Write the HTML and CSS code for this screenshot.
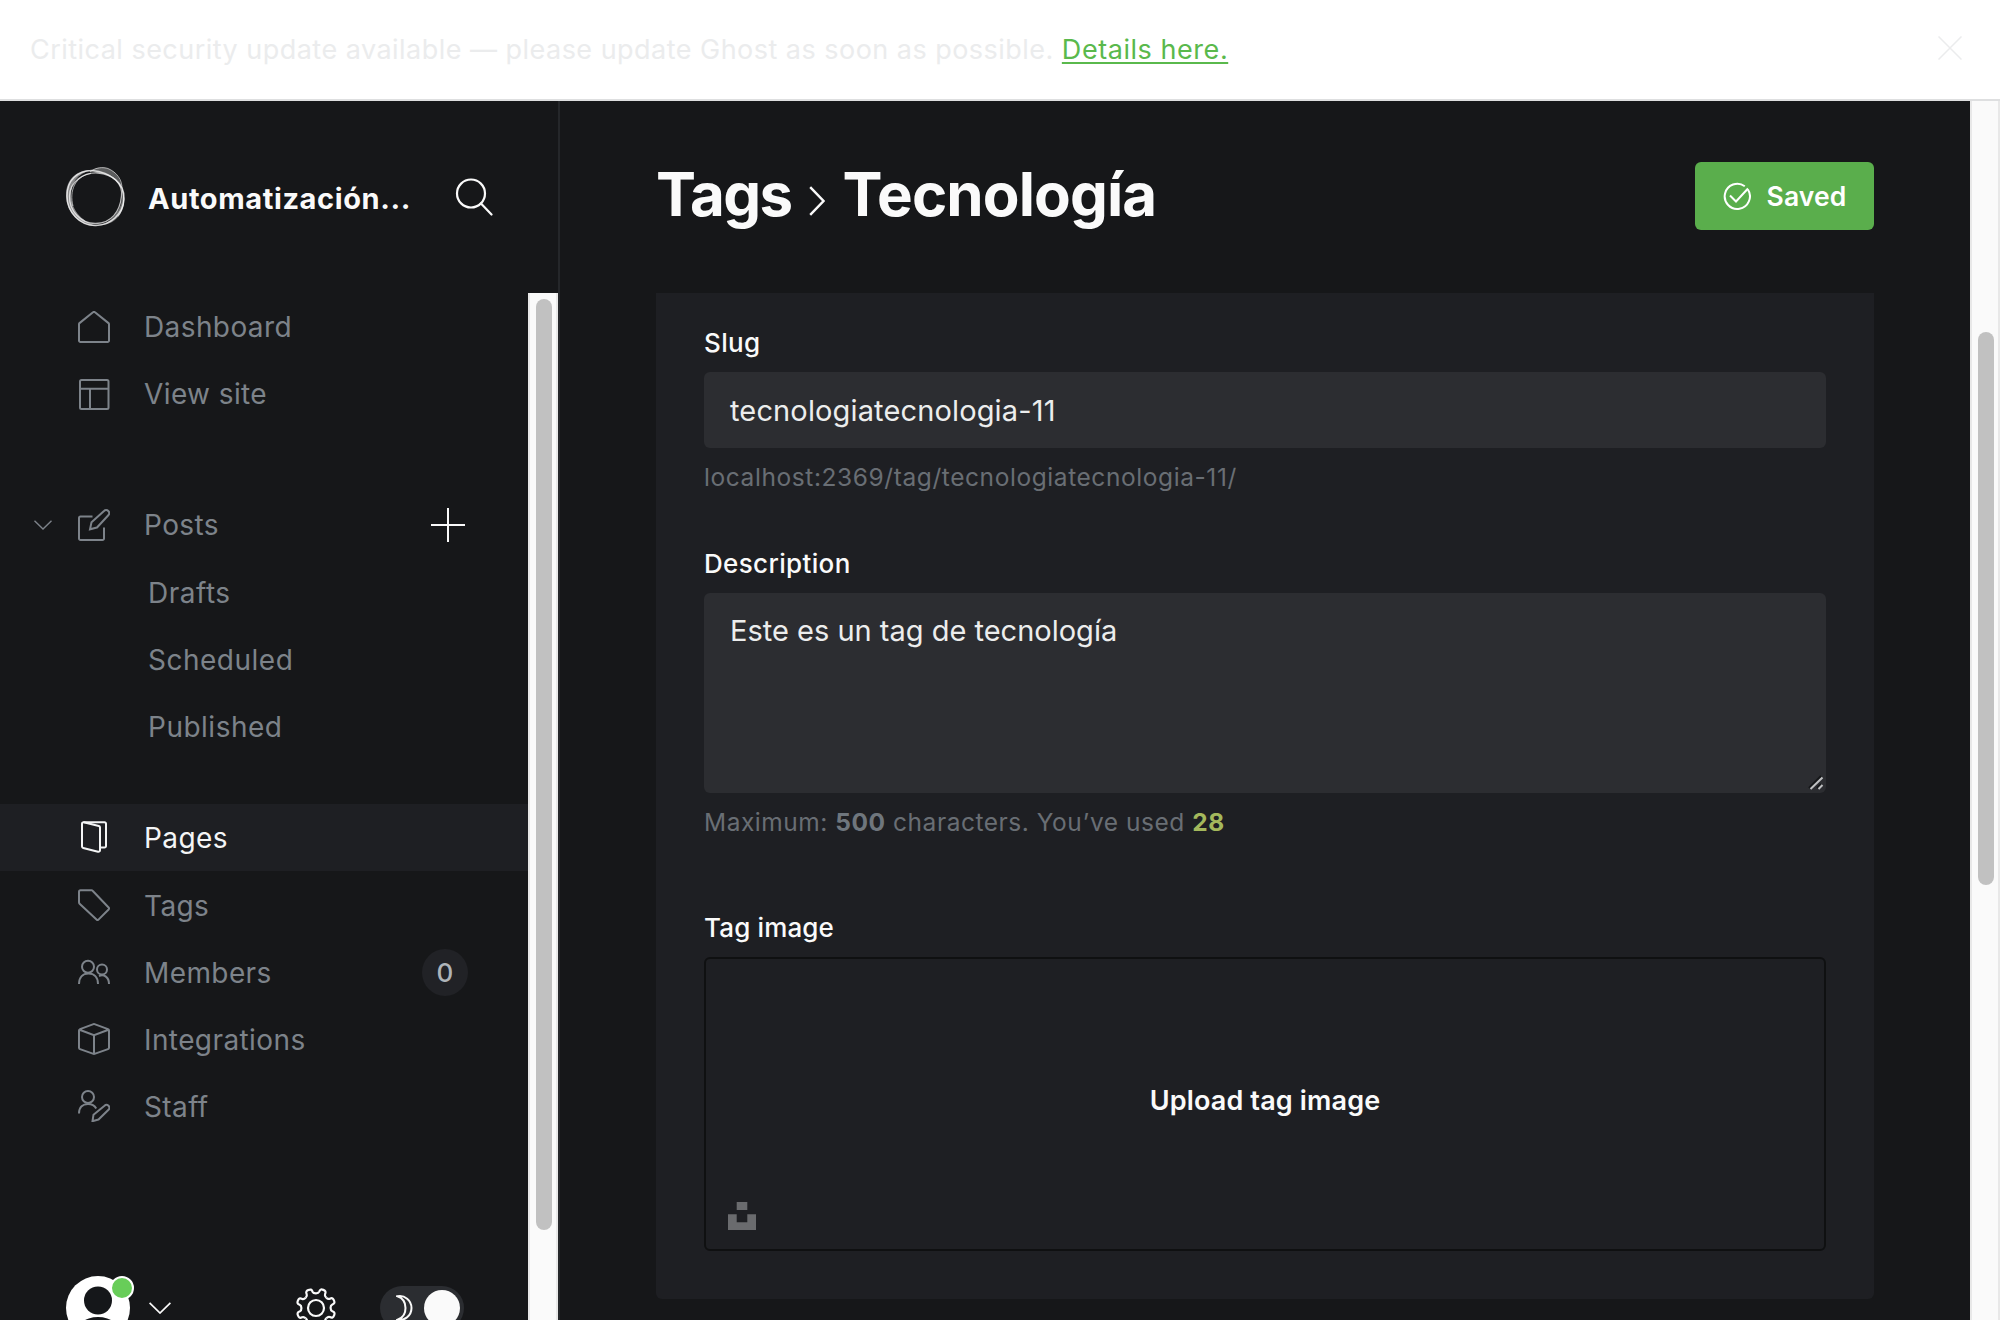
FILE: index.html
```html
<!DOCTYPE html>
<html lang="en">
<head>
<meta charset="utf-8">
<title>Tags - Ghost</title>
<link rel="stylesheet" href="styles.css">
</head>
<body>
<header class="banner">
  <p class="banner-text">Critical security update available — please update Ghost as soon as possible. <a class="banner-link" href="#">Details here.</a></p>
  <svg class="banner-close" viewBox="0 0 24 24"><path d="M.5.5l23 23M23.5.5l-23 23"/></svg>
</header>
<div class="app">
  <aside class="sidebar">
    <div class="site">
      <svg class="site-logo" viewBox="0 0 62 62">
        <g fill="#fff" stroke="none">
          <path opacity=".5" d="M26 4C10 4 1 15 1 29c0 16 12 31 31 31C20 57 6 46 6 29 6 17 12 8 26 4z"/>
          <path opacity=".3" d="M26 5C31 1.500 36 1 41 2c8 2 15 9 16 21C54 14 46 6 33 7z"/>
          <path opacity=".42" d="M57 23c4 10 3 20-4 28-5 6-13 9-22 8 10-1 16-5 20-11 6-8 7-16 6-25z"/>
        </g>
        <g fill="none" stroke="#fff">
          <path stroke-width="1.500" opacity=".75" d="M27 4.500C46 6 60 18 59 33 58 48 46 59 31 59.500 15 60 2 46 2 30 2 14 12 5 27 4.500z"/>
          <path stroke-width="1.300" opacity=".7" d="M33 7C48 8 58 18 56.500 30 55 46 46 57 31 57.500 16 58 4 45 4.500 30 5 16 18 6 33 7z"/>
          <path stroke-width="1" opacity=".6" d="M25 6C31 1 38 1 43 2.500c9 4 14 11 14 20 3 10 2 20-4 28M8 40C4 25 10 10 26 7.500"/>
        </g>
      </svg>
      <span class="site-name">Automatización...</span>
      <svg class="site-search" viewBox="0 0 38 38"><circle cx="16" cy="15.500" r="14"/><path d="M26 25.500l10.500 11"/></svg>
    </div>
    <div class="sidebar-body">
      <nav class="nav">
        <ul class="nav-group">
          <li class="nav-item"><svg class="icon" viewBox="0 0 32 32"><path d="M1 13.200V29.500A1.500 1.500 0 0 0 2.500 31h27a1.500 1.500 0 0 0 1.500-1.500V13.200a1.500 1.500 0 0 0-.5-1.100L17 1.300a1.500 1.500 0 0 0-2 0L1.500 12.100a1.500 1.500 0 0 0-.5 1.100z"/></svg><span>Dashboard</span></li>
          <li class="nav-item"><svg class="icon" viewBox="0 0 32 32"><rect x="2" y="2" width="28.500" height="29" rx="1.500"/><path d="M2 10.800h28.500M12 10.800V31"/></svg><span>View site</span></li>
        </ul>
        <ul class="nav-group">
          <li class="nav-item"><svg class="nav-arrow" viewBox="0 0 18 10"><path d="M.5.8L9 9 17.500.8"/></svg><svg class="icon" viewBox="0 0 32 32"><path d="M14.500 7.500H2.500A1.500 1.500 0 0 0 1 9v20.500A1.500 1.500 0 0 0 2.500 31h22a1.500 1.500 0 0 0 1.500-1.500V18.500"/><path d="M19 18.500l-7 1.800 1.500-7L26 2a3 3 0 0 1 4.300 0 3 3 0 0 1 0 4.200z"/></svg><span>Posts</span><svg class="nav-add" viewBox="0 0 36 36"><path d="M18 1v34M1 18h34"/></svg></li>
          <li class="nav-item nav-sub"><span>Drafts</span></li>
          <li class="nav-item nav-sub"><span>Scheduled</span></li>
          <li class="nav-item nav-sub"><span>Published</span></li>
        </ul>
        <ul class="nav-group nav-group-last">
          <li class="nav-item nav-active"><svg class="icon" viewBox="0 0 32 32"><path d="M5.500 1.200h21A1.500 1.500 0 0 1 28 2.700V25a1.500 1.500 0 0 1-1.500 1.500H22.500"/><path d="M5.800 1.300l15 3.700a1.600 1.600 0 0 1 1.200 1.600v22.700a1.500 1.500 0 0 1-2 1.400L5.200 27A1.600 1.600 0 0 1 4 25.500V2.700a1.500 1.500 0 0 1 1.800-1.400z"/></svg><span>Pages</span></li>
          <li class="nav-item"><svg class="icon" viewBox="0 0 32 32"><path d="M13.500 1.200h-11A1.500 1.500 0 0 0 1 2.700v10.600a2 2 0 0 0 .6 1.400L18.500 30.600a1.500 1.500 0 0 0 2 0L30.600 20.500a1.500 1.500 0 0 0 0-2L14.600 1.700a1.500 1.500 0 0 0-1.100-.5z"/></svg><span>Tags</span></li>
          <li class="nav-item"><svg class="icon" viewBox="0 0 32 32"><circle cx="10" cy="10.800" r="6"/><circle cx="24" cy="13.500" r="5"/><path d="M1 28c0-7 4-10.500 9.500-10.500S20 21 20 28M21 20c5-2 10 1 10 8"/></svg><span>Members</span><span class="nav-count">0</span></li>
          <li class="nav-item"><svg class="icon" viewBox="0 0 32 32"><path d="M16.500 1.100l13.500 5a1.500 1.500 0 0 1 1 1.400v17.200a1.500 1.500 0 0 1-1 1.400l-13.500 4.800a1.500 1.500 0 0 1-1 0L2 26.100a1.500 1.500 0 0 1-1-1.400V7.500a1.500 1.500 0 0 1 1-1.400l13.500-5a1.500 1.500 0 0 1 1 0zM1.500 6.800L16 12.300l14.500-5.500M16 12.300V31"/></svg><span>Integrations</span></li>
          <li class="nav-item"><svg class="icon" viewBox="0 0 32 32"><circle cx="10" cy="7" r="6"/><path d="M1 23.500c0-6.500 4-9.500 9-9.500 3.700 0 6.700 1.700 8.200 4.500"/><path d="M20.500 29.500l-6 1.700 1-6.500L26.500 15.800a2.800 2.800 0 0 1 4 4z"/></svg><span>Staff</span></li>
        </ul>
        <div class="user-bar">
          <div class="avatar">
            <svg class="avatar-image" viewBox="0 0 64 64"><circle cx="32" cy="32" r="32" fill="#fff"/><circle cx="32" cy="24.500" r="14" fill="#15171a"/><ellipse cx="32" cy="60" rx="24" ry="19" fill="#15171a"/></svg>
            <span class="avatar-status"></span>
          </div>
          <svg class="user-arrow" viewBox="0 0 22 12"><path d="M.6.8L11 11 21.400.8"/></svg>
          <svg class="user-gear" viewBox="0 0 40 40">
            <defs><path id="tooth" d="M20 5.400C21.600 5.400 22.600 5 23.200 3.600 24.200 1 25.500 1.200 27.300 1.900 29.500 2.800 30.200 3.700 29 6.300 28.400 7.800 29.200 8.600 30.300 9.700"/></defs>
            <circle cx="20" cy="20" r="8"/>
            <use href="#tooth"/><use href="#tooth" transform="rotate(45 20 20)"/><use href="#tooth" transform="rotate(90 20 20)"/><use href="#tooth" transform="rotate(135 20 20)"/><use href="#tooth" transform="rotate(180 20 20)"/><use href="#tooth" transform="rotate(225 20 20)"/><use href="#tooth" transform="rotate(270 20 20)"/><use href="#tooth" transform="rotate(315 20 20)"/>
          </svg>
          <div class="theme-toggle">
            <svg class="theme-moon" viewBox="0 0 17 26"><path d="M1.500 1.300c7-1.500 14 4 14 11.700S8.500 26 1.500 24.700C6.500 23 9.500 18.500 9.500 13S6.500 3 1.500 1.300z"/></svg>
            <span class="theme-knob"></span>
          </div>
        </div>
      </nav>
      <div class="scrollbar scrollbar-nav"><span class="scrollbar-thumb"></span></div>
    </div>
  </aside>
  <main class="main">
    <div class="page-header">
      <h1 class="page-title"><span class="title-root">Tags</span><svg class="title-arrow" viewBox="0 0 16 30"><path d="M1.200 1.200L14.500 15 1.200 28.800"/></svg><span>Tecnología</span></h1>
      <button class="save-button"><svg class="save-icon" viewBox="0 0 28 28"><path d="M21.800 4.200A12.600 12.600 0 1 0 24.900 7.500"/><path d="M7 13.500l6 6L25 6.500"/></svg><span>Saved</span></button>
    </div>
    <section class="card">
      <div class="field">
        <div class="label label-slug">Slug</div>
        <div class="control control-slug">tecnologiatecnologia-11</div>
        <p class="help">localhost:2369/tag/tecnologiatecnologia-11/</p>
      </div>
      <div class="field field-description">
        <div class="label">Description</div>
        <div class="control control-area"><span>Este es un tag de tecnología</span><svg class="resize-handle" viewBox="0 0 16 16"><path class="grip-shadow" d="M1 13L13 1M9 13l4-4"/><path class="grip-light" d="M2.500 14L14.500 2.500M10.500 14l4-4"/></svg></div>
        <p class="help help-count">Maximum: <b class="help-max">500</b> characters. You’ve used <b class="help-used">28</b></p>
      </div>
      <div class="field field-image">
        <div class="label label-image">Tag image</div>
        <div class="uploader">
          <span class="uploader-text">Upload tag image</span>
          <svg class="unsplash" viewBox="0 0 28 28"><path d="M8.700 0h10.600v7.900H8.700zM19.300 12.300H28V28H0V12.300h8.700v7.900h10.600z"/></svg>
        </div>
      </div>
    </section>
  </main>
  <div class="scrollbar scrollbar-page"><span class="scrollbar-thumb"></span></div>
</div>
</body>
</html>
```
FILE: styles.css
```css
* { box-sizing: border-box; }
body {
  margin: 0;
  width: 2000px;
  height: 1320px;
  overflow: hidden;
  display: flex;
  flex-direction: column;
  background: #161719;
  color: #fafafa;
  font-family: Inter, "Liberation Sans", sans-serif;
  font-size: 28px;
  letter-spacing: .4px;
}
p, h1, ul { margin: 0; padding: 0; }
svg { display: block; flex: none; fill: none; stroke: currentColor; stroke-width: 2; }

.banner {
  flex: none;
  height: 101px;
  display: flex;
  align-items: center;
  justify-content: space-between;
  padding: 0 38px 4px 30px;
  background: #fff;
  border-bottom: 2px solid #dedfe0;
}
.banner-text { padding-top: 4px; color: #ebeced; font-size: 27px; letter-spacing: .47px; }
.banner-link { color: #5ab94c; text-decoration: underline; text-decoration-thickness: 2px; text-underline-offset: 3px; letter-spacing: .55px; }
.banner-close { width: 24px; height: 24px; color: #ebeced; stroke-width: 1.5; }

.app { flex: 1; min-height: 0; display: grid; grid-template-columns: 560px 1fr 30px; }

.sidebar { display: flex; flex-direction: column; min-height: 0; border-right: 2px solid #25272a; }
.site { flex: none; height: 192px; display: flex; align-items: center; padding-left: 65px; }
.site-logo { width: 62px; height: 62px; }
.site-name { width: 307px; margin-left: 21px; padding-top: 3px; font-size: 29px; font-weight: 700; letter-spacing: .6px; white-space: nowrap; }
.site-search { width: 38px; height: 38px; stroke-width: 2.2; stroke-linecap: round; }
.sidebar-body { flex: 1; min-height: 0; display: flex; overflow: hidden; }
.nav { flex: 1; }
.nav-group { list-style: none; margin-bottom: 63.6px; }
.nav-group + .nav-group { margin-bottom: 44px; }
.nav-item { position: relative; height: 67.2px; display: flex; align-items: center; padding-left: 78px; color: #7d838a; }
.icon { width: 32px; height: 32px; margin-right: 34px; }
.nav-arrow { position: absolute; left: 34px; top: 29px; width: 18px; height: 10px; stroke-width: 1.4; }
.nav-add { width: 36px; height: 36px; margin-left: auto; margin-right: 62px; color: #fafafa; }
.nav-sub { padding-left: 148px; padding-top: 1.5px; letter-spacing: .5px; }
.nav-group-last .nav-item > span { padding-top: 2px; }
.nav-active { background: #1e1f23; color: #f4f5f6; }
.nav-group-last .nav-item > .nav-count { width: 46px; height: 47px; margin: 1px 60px 0 auto; padding-top: 0; border-radius: 50%; background: #212226; color: #aeb4b9; font-size: 26px; font-weight: 500; line-height: 47px; text-align: center; }
.user-bar { display: flex; align-items: center; height: 64px; padding-left: 66px; }
.nav-group.nav-group-last { margin-bottom: 0; }
.nav-group-last + .user-bar { margin-top: 136px; }
.avatar { position: relative; width: 64px; height: 64px; }
.avatar-image { width: 64px; height: 64px; stroke: none; }
.avatar-status { position: absolute; left: 44px; top: 0; width: 24px; height: 24px; border: 2px solid #fff; border-radius: 50%; background: #68cd59; }
.user-arrow { width: 22px; height: 12px; margin-left: 19px; stroke-width: 1.7; }
.user-gear { width: 40px; height: 40px; margin-left: 125px; stroke-width: 2.2; }
.theme-toggle { display: flex; align-items: center; justify-content: space-between; width: 84px; height: 44px; margin-left: 44px; padding: 0 4px 0 16px; border-radius: 22px; background: #2b2d31; }
.theme-moon { width: 17px; height: 26px; }
.theme-knob { width: 36px; height: 36px; border-radius: 50%; background: #fafafa; }

.scrollbar { width: 30px; display: flex; justify-content: center; background: #fafafa; border: solid #e8e8e8; border-width: 0 2px; }
.scrollbar-thumb { width: 16px; border-radius: 8px; background: #c1c1c1; }
.scrollbar-nav .scrollbar-thumb { height: 931px; margin-top: 6px; margin-left: 2px; }
.scrollbar-page .scrollbar-thumb { height: 553px; margin-top: 231px; margin-left: 2px; }

.main { padding: 0 96px; min-width: 0; }
.page-header { height: 192px; display: flex; align-items: center; justify-content: space-between; padding-bottom: 2px; }
.page-title { display: flex; align-items: center; margin-bottom: 4px; font-size: 60px; font-weight: 700; line-height: 72px; letter-spacing: -.9px; }
.title-root { letter-spacing: -1.6px; }
.title-arrow { width: 16px; height: 30px; margin: 13px 18px 0 17px; stroke-width: 2.4; }
.save-button { width: 179px; height: 68px; display: flex; align-items: center; justify-content: center; gap: 16px; padding: 0; border: 0; border-radius: 6px; background: #5aae4c; color: #fff; font: 600 26.5px Inter, sans-serif; letter-spacing: .1px; }
.save-icon { width: 28px; height: 28px; }

.card { height: 1006px; padding: 32px 48px; border-radius: 0 0 6px 6px; background: #1e1f23; }
.label { height: 35px; margin-bottom: 12px; font-size: 26px; font-weight: 500; line-height: 35px; letter-spacing: .35px; }
.label-image { letter-spacing: .15px; }
.control { display: flex; justify-content: space-between; height: 76px; padding: 17px 26px; border-radius: 6px; background: #2c2d31; color: #eceded; font-size: 29px; line-height: 42px; letter-spacing: 0; }
.control-slug { padding-top: 18px; letter-spacing: .14px; }
.control-area { height: 200px; }
.resize-handle { align-self: flex-end; width: 16px; height: 16px; margin: 0 -24px -15px 0; }
.grip-shadow { stroke: #151719; }
.grip-light { stroke: #bfc0c2; }
.help { height: 35px; margin-top: 11px; padding-top: 1px; color: #696e74; font-size: 24.5px; line-height: 35px; letter-spacing: .58px; }
.help-count { letter-spacing: .53px; }
.help-max { color: #6f767d; font-weight: 700; }
.help-used { color: #a4b85c; font-weight: 700; }
.field-description { margin-top: 52px; }
.field-image { margin-top: 71px; }
.uploader { position: relative; height: 294px; display: flex; align-items: center; justify-content: center; padding-bottom: 8px; border: 2px solid #0f1011; border-radius: 6px; }
.uploader-text { font-size: 27px; font-weight: 600; letter-spacing: .15px; }
.unsplash { position: absolute; left: 22px; bottom: 19px; width: 28px; height: 28px; fill: #6a6b6e; stroke: none; }
```
